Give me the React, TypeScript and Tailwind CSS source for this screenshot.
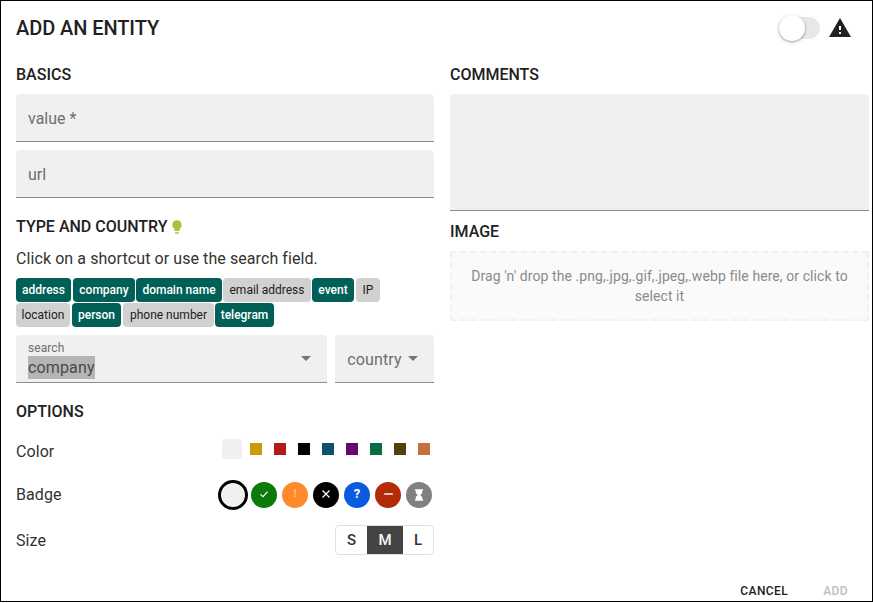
const tags = [
  [
    { label: "address", on: true, w: "w-[55px] mr-[2px]" },
    { label: "company", on: true, w: "w-[62px] mr-[1px]" },
    { label: "domain name", on: true, w: "w-[86px] mr-[1px]" },
    { label: "email address", on: false, w: "w-[88px] mr-[1px]" },
    { label: "event", on: true, w: "w-[42px] mr-[2px]" },
    { label: "IP", on: false, w: "w-[24px]" },
  ],
  [
    { label: "location", on: false, w: "w-[54px] mr-[2px]" },
    { label: "person", on: true, w: "w-[49px] mr-[2px]" },
    { label: "phone number", on: false, w: "w-[91px] mr-[1px]" },
    { label: "telegram", on: true, w: "w-[59px]" },
  ],
];

const colors = ["bg-[#c99a0a]", "bg-[#b31a1a]", "bg-[#000000]", "bg-[#0d4f6e]", "bg-[#640a6e]", "bg-[#086b42]", "bg-[#533f0d]", "bg-[#c8703d]"];

function SectionTitle({ children }: { children: React.ReactNode }) {
  return <h2 className="text-[16px] leading-[20px] font-medium tracking-normal text-[#212121]">{children}</h2>;
}

function Caret() {
  return <span className="h-0 w-0 border-x-[5px] border-t-[5px] border-x-transparent border-t-[#757575]" />;
}

function Tag({ label, on, w }: { label: string; on: boolean; w: string }) {
  return (
    <span
      className={`flex h-6 items-center justify-center rounded-[4px] text-[12px] tracking-normal ${w} ${
        on ? "bg-[#005f56] font-medium text-white" : "bg-[#d1d1d1] text-[#1c1c1c]"
      }`}
    >
      {label}
    </span>
  );
}

function TextField({ label }: { label: string }) {
  return (
    <div className="flex h-12 items-center rounded-t-[4px] border-b border-[#8c8c8c] bg-[#f0f0f0] px-3 pt-[2px] text-[16px] tracking-normal text-[#6f6f6f]">
      {label}
    </div>
  );
}

function OptionRow({ label, className, labelClass, children }: { label: string; className: string; labelClass?: string; children: React.ReactNode }) {
  return (
    <div className={`flex items-center justify-between text-[16px] text-[#333333] ${className}`}>
      <span className={labelClass}>{label}</span>
      {children}
    </div>
  );
}

function Badge({ className, children }: { className: string; children: React.ReactNode }) {
  return <span className={`flex h-[26px] w-[26px] items-center justify-center rounded-full text-white ${className}`}>{children}</span>;
}

export default function App() {
  return (
    <div className="flex h-[602px] w-[873px] flex-col overflow-hidden border border-black bg-white font-['Roboto',sans-serif] tracking-[0.08px]">
      <header className="flex h-[53px] items-center justify-between pl-[15px] pr-[20px]">
        <h1 className="text-[20px] font-medium tracking-[-0.08px] text-[#212121]">ADD AN ENTITY</h1>
        <div className="flex items-center gap-[8px]">
          <div className="relative h-[22px] w-[41px] rounded-full bg-[#e8e8e8]">
            <span className="absolute -top-[2px] left-0 h-[26px] w-[26px] rounded-full bg-white shadow-[0_1px_3px_rgba(0,0,0,0.4)]" />
          </div>
          <svg viewBox="0 0 24 24" className="h-6 w-6 fill-[#212121]">
            <path d="M1 21h22L12 2 1 21zm12-3h-2v-2h2v2zm0-4h-2v-4h2v4z" />
          </svg>
        </div>
      </header>

      <main className="flex flex-1 gap-4 pl-[15px] pr-[3px]">
        <section className="flex w-[418px] flex-col">
          <div className="mt-[11px]">
            <SectionTitle>BASICS</SectionTitle>
          </div>
          <div className="mt-[9px] flex flex-col gap-2">
            <TextField label="value *" />
            <TextField label="url" />
          </div>

          <div className="mt-[19px] flex items-center gap-[1px]">
            <SectionTitle>TYPE AND COUNTRY</SectionTitle>
            <svg viewBox="0 0 24 24" className="h-4 w-4 fill-[#a5c63b]">
              <path d="M9 21c0 .5.4 1 1 1h4c.6 0 1-.5 1-1v-1H9v1zm3-19C8.1 2 5 5.1 5 9c0 2.4 1.2 4.5 3 5.7V17c0 .5.4 1 1 1h6c.6 0 1-.5 1-1v-2.3c1.8-1.3 3-3.4 3-5.7 0-3.9-3.1-7-7-7z" />
            </svg>
          </div>
          <p className="mt-[12px] text-[16px] leading-[20px] text-[#333333]">Click on a shortcut or use the search field.</p>

          <div className="mt-[9px] flex flex-col gap-px">
            {tags.map((row, i) => (
              <div key={i} className="flex">
                {row.map((t) => (
                  <Tag key={t.label} {...t} />
                ))}
              </div>
            ))}
          </div>

          <div className="mt-2 flex gap-2">
            <div className="flex h-12 w-[312px] items-center justify-between rounded-t-[4px] border-b border-[#8c8c8c] bg-[#f0f0f0] pl-3 pr-[16px]">
              <div className="mt-[6px] flex flex-col self-start">
                <span className="text-[12px] leading-[15px] text-[#6f6f6f]">search</span>
                <span className="w-fit bg-[#b5b5b5] text-[16px] leading-[23px] tracking-[0.15px] text-[#4a4a4a]">company</span>
              </div>
              <Caret />
            </div>
            <div className="flex h-12 w-[99px] items-center justify-between rounded-t-[4px] border-b border-[#8c8c8c] bg-[#f0f0f0] pl-3 pr-[16px] text-[16px] tracking-[0.15px] text-[#6f6f6f]">
              <span className="mt-[2px]">country</span>
              <Caret />
            </div>
          </div>

          <div className="mt-[19px]">
            <SectionTitle>OPTIONS</SectionTitle>
          </div>

          <OptionRow label="Color" className="mt-[18px] h-[24px]">
            <div className="mb-[6px] mr-[4px] flex items-center">
              <span className="mr-2 h-5 w-5 rounded-[2px] bg-[#f0f0f0]" />
              <div className="flex gap-3">
                {colors.map((c) => (
                  <span key={c} className={`h-3 w-3 ${c}`} />
                ))}
              </div>
            </div>
          </OptionRow>

          <OptionRow label="Badge" className="mt-[16px] h-[30px]">
            <div className="mr-[2px] flex items-center gap-[5px]">
              <span className="-mr-[2px] h-[30px] w-[30px] rounded-full border-[3px] border-black bg-[#f0f0f0]" />
              <Badge className="bg-[#0a7a0a]">
                <svg viewBox="0 0 12 12" className="mb-[2px] h-3 w-3 fill-none stroke-white stroke-[1.1]">
                  <path d="M2.5 6.3 5 8.6 9.5 3.6" />
                </svg>
              </Badge>
              <Badge className="bg-[#ff8a2b]">
                <span className="mb-[2px] text-[11px] font-bold text-[#ffc58f]">!</span>
              </Badge>
              <Badge className="bg-black">
                <svg viewBox="0 0 12 12" className="mb-[2px] h-3 w-3 fill-none stroke-white stroke-[1.2]">
                  <path d="M2.5 2.5l7 7M9.5 2.5l-7 7" />
                </svg>
              </Badge>
              <Badge className="bg-[#0a5be0]">
                <span className="mb-[2px] text-[13px] font-bold">?</span>
              </Badge>
              <Badge className="bg-[#b32c08]">
                <span className="mb-[2px] h-[2px] w-[9px] rounded-sm bg-[#f3c4b0]" />
              </Badge>
              <Badge className="bg-[#808080]">
                <svg viewBox="0 0 12 12" className="mb-[1px] h-[14px] w-[14px] fill-white">
                  <path d="M2.5 1h7v1.2H8.8V3.6C8.8 4.8 7.6 5.4 6.9 6c.7.6 1.9 1.2 1.9 2.4v1.4h.7V11h-7V9.8h.7V8.4C3.2 7.2 4.4 6.6 5.1 6 4.4 5.4 3.2 4.8 3.2 3.6V2.2h-.7z" />
                </svg>
              </Badge>
            </div>
          </OptionRow>

          <OptionRow label="Size" labelClass="mt-[2px]" className="mt-[15px] h-[30px]">
            <div className="flex h-[30px] overflow-hidden rounded-[4px] border border-[#e0e0e0] text-[15px] font-medium text-[#333333]">
              <span className="flex w-[31px] items-center justify-center">S</span>
              <span className="flex w-[36px] items-center justify-center bg-[#444444] text-[#f5f5f5]">M</span>
              <span className="flex w-[30px] items-center justify-center">L</span>
            </div>
          </OptionRow>
        </section>

        <section className="flex flex-1 flex-col">
          <div className="mt-[11px]">
            <SectionTitle>COMMENTS</SectionTitle>
          </div>
          <div className="mt-[9px] h-[117px] rounded-t-[4px] border-b border-[#8c8c8c] bg-[#f0f0f0]" />
          <div className="mt-[11px]">
            <SectionTitle>IMAGE</SectionTitle>
          </div>
          <div className="mt-[9px] flex h-[70px] items-center justify-center rounded-[2px] border-2 border-dashed border-[#f0f0f0] bg-[#fafafa] px-4 text-center text-[14px] leading-[20px] text-[#8a8a8a]">
            Drag 'n' drop the .png,.jpg,.gif,.jpeg,.webp file here, or click to select it
          </div>
        </section>
      </main>

      <footer className="flex h-[20px] items-start justify-end gap-[35px] pr-[24px] text-[12px] font-medium leading-[20px] tracking-[0.4px]">
        <span className="text-[#1c1c1c]">CANCEL</span>
        <span className="text-[#bdbdbd]">ADD</span>
      </footer>
    </div>
  );
}
